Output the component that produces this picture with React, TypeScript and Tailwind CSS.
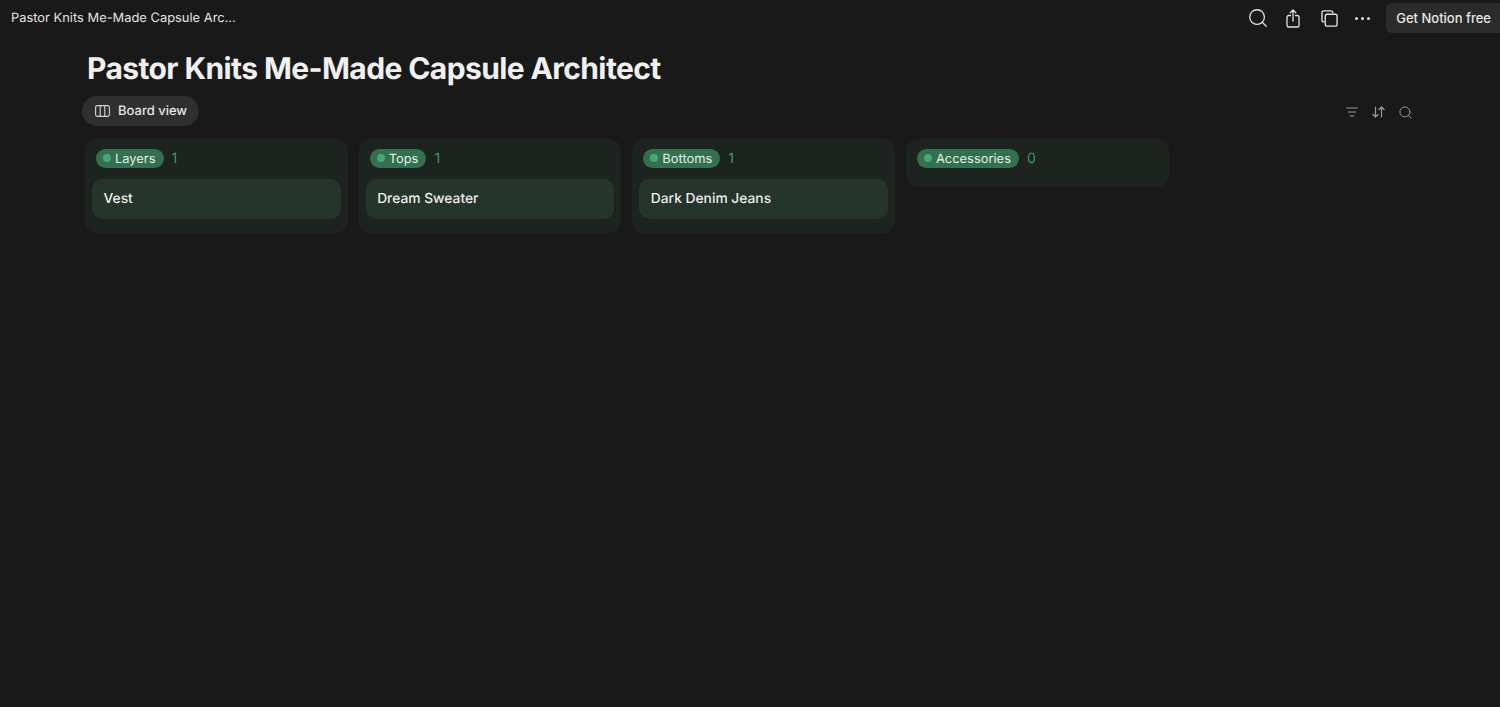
import { Search } from "lucide-react";

const columns = [
  { name: "Layers", count: 1, card: "Vest" },
  { name: "Tops", count: 1, card: "Dream Sweater" },
  { name: "Bottoms", count: 1, card: "Dark Denim Jeans" },
  { name: "Accessories", count: 0, card: null },
];

function ShareIcon() {
  return (
    <svg width="14" height="19" viewBox="0 0 14 19" fill="none" stroke="#e3e3e3" strokeWidth="1.3" strokeLinecap="round" strokeLinejoin="round">
      <path d="M7 12V1.2M4.2 3.8 7 1l2.8 2.8" />
      <path d="M4.5 6.5H2.6C1.7 6.5 1 7.2 1 8.1v8.3c0 .9.7 1.6 1.6 1.6h8.8c.9 0 1.6-.7 1.6-1.6V8.1c0-.9-.7-1.6-1.6-1.6H9.5" />
    </svg>
  );
}

function DuplicateIcon() {
  return (
    <svg width="17" height="17" viewBox="0 0 18 18" fill="none" stroke="#e3e3e3" strokeWidth="1.4" strokeLinejoin="round">
      <path d="M3.5 12.5H3c-1.1 0-2-.9-2-2V3c0-1.1.9-2 2-2h7.5c1.1 0 2 .9 2 2v.5" />
      <rect x="4.5" y="4.5" width="12.5" height="12.5" rx="2" />
    </svg>
  );
}

function BoardIcon() {
  return (
    <svg width="15" height="12" viewBox="0 0 15 12" fill="none" stroke="#d4d4d4" strokeWidth="1.1">
      <rect x="0.6" y="0.6" width="13.8" height="10.8" rx="1.8" />
      <path d="M5.2 0.6v10.8M9.8 0.6v10.8" />
    </svg>
  );
}

function FilterIcon() {
  return (
    <svg width="12" height="10" viewBox="0 0 12 10" fill="none" stroke="#9b9b9b" strokeWidth="1.2" strokeLinecap="round">
      <path d="M0.7 1h10.6M2.4 5h7.2M4.2 9h3.6" />
    </svg>
  );
}

function SortIcon() {
  return (
    <svg width="13" height="12" viewBox="0 0 13 12" fill="none" stroke="#9b9b9b" strokeWidth="1.2" strokeLinecap="round" strokeLinejoin="round">
      <path d="M3.5 1v10M1 8.5 3.5 11 6 8.5M9.5 11V1M7 3.5 9.5 1 12 3.5" />
    </svg>
  );
}

export default function App() {
  return (
    <div className="h-[707px] w-[1500px] overflow-hidden bg-[#191919] font-['Inter',sans-serif] text-[#f0f0f0] antialiased [text-rendering:geometricPrecision]">
      <header className="flex h-9 items-center justify-between pl-[11px]">
        <span className="pt-0.5 text-[12.9px] text-[#e3e3e3]">Pastor Knits Me-Made Capsule Arc...</span>
        <div className="flex items-center">
          <Search size={22} strokeWidth={1.4} color="#e3e3e3" />
          <span className="ml-[17px] flex"><ShareIcon /></span>
          <span className="ml-[21px] flex"><DuplicateIcon /></span>
          <span className="ml-[17px] flex gap-[3px]">
            <i className="size-[3px] rounded-full bg-[#e3e3e3]" />
            <i className="size-[3px] rounded-full bg-[#e3e3e3]" />
            <i className="size-[3px] rounded-full bg-[#e3e3e3]" />
          </span>
          <button className="ml-[16px] h-[30px] rounded-l-md bg-[#2b2b2b] pl-[10px] pr-[9px] pt-px text-[13px] font-medium text-[#e6e6e6]">
            Get Notion free
          </button>
        </div>
      </header>

      <main className="pl-[82px] pr-[87px]">
        <h1 className="mt-[13px] pl-[5px] text-[30px] leading-10 font-bold tracking-[-0.6px] text-[#f0f0f0]">
          Pastor Knits Me-Made Capsule Architect
        </h1>
        <div className="mt-[7px] flex items-center justify-between">
          <div className="flex h-[30px] items-center gap-2 rounded-full bg-[#2f2f2f] pl-[13px] pr-3 text-[13px] font-medium text-[#e6e6e6]">
            <BoardIcon />
            <span className="pt-0.5">Board view</span>
          </div>
          <div className="flex items-center gap-[14px] pt-0.5">
            <FilterIcon />
            <SortIcon />
            <span className="-ml-px flex"><Search size={15} strokeWidth={1.5} color="#9b9b9b" /></span>
          </div>
        </div>

        <div className="mt-[13px] flex items-start gap-[11px] pl-[3px]">
          {columns.map((col) => (
            <section key={col.name} className={`w-[262.67px] rounded-xl bg-[#1d231e] px-[7px] pt-[9px] ${col.card ? "pb-[14px]" : "pb-[19px]"}`}>
              <div className="flex h-5 items-center gap-2 pl-1">
                <span className="flex h-[19px] items-center gap-1 rounded-full bg-[#33704f] pl-[7px] pr-2 text-[12.9px] text-[#e6ece8]">
                  <i className="size-2 rounded-full bg-[#4aa673]" />
                  <span className="pt-[3px]">{col.name}</span>
                </span>
                <span className="pt-px text-sm text-[#3f9a68]">{col.count}</span>
              </div>
              {col.card && (
                <div className="mt-[11px] flex h-10 items-center rounded-[10px] bg-[#25352b] px-[11.5px] text-[13.8px] font-medium text-[#ededed]">
                  {col.card}
                </div>
              )}
            </section>
          ))}
        </div>
      </main>
    </div>
  );
}
